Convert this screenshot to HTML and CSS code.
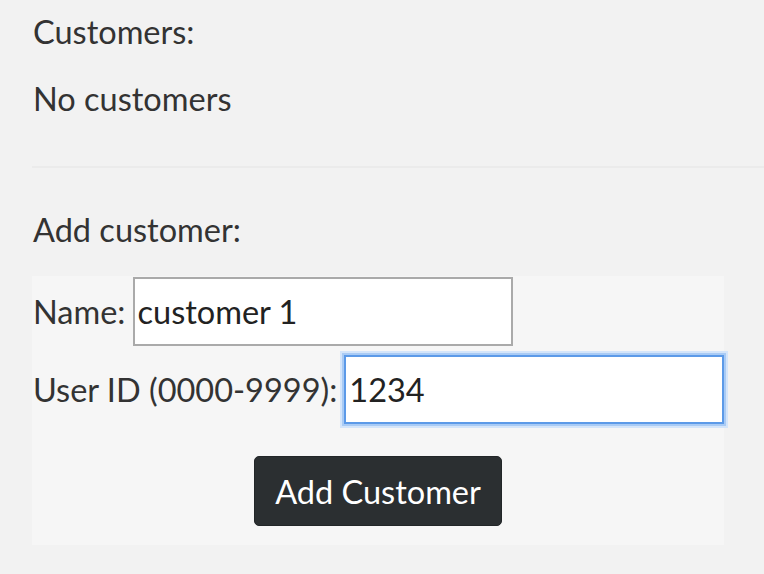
FILE: index.html
```html
<!DOCTYPE html>
<html>
<head>
<meta charset="utf-8">
<link rel="stylesheet" href="styles.css">
</head>
<body>
<div class="page">
  <p class="line first">Customers:</p>
  <p class="line">No customers</p>
  <hr class="divider">
  <p class="line add-title">Add customer:</p>
  <form class="form-box">
    <div class="row">
      <label class="label" for="name">Name:</label>
      <input class="field" id="name" type="text" value="customer 1">
    </div>
    <div class="row">
      <label class="label" for="uid">User ID (0000-9999):</label>
      <input class="field focused" id="uid" type="text" value="1234">
    </div>
    <div class="actions">
      <button class="btn" type="button">Add Customer</button>
    </div>
  </form>
</div>
</body>
</html>
```

FILE: styles.css
```css
html, body {
  margin: 0;
  padding: 0;
  background: #f2f2f2;
}
body {
  font-family: Lato, "Open Sans", sans-serif;
  color: #333333;
  font-size: 32.5px;
}
.page {
  padding: 8px 0 0 32px;
}
.line {
  margin: 0 0 19px 1px;
  font-size: 32.5px;
  line-height: 48px;
}
.divider {
  margin: 43px 0 0 0;
  border: 0;
  height: 2px;
  background: #ebebeb;
}
.add-title {
  margin-top: 38px;
  margin-bottom: 22px;
}
.form-box {
  width: 692px;
  background: #f6f6f6;
  padding: 1px 0 19px 0;
  box-sizing: border-box;
}
.row {
  display: flex;
  align-items: center;
  height: 69px;
  margin-bottom: 9px;
}
.label {
  padding-left: 1px;
  margin-right: 7px;
  white-space: nowrap;
}
.field {
  box-sizing: border-box;
  width: 380px;
  height: 69px;
  border: 2px solid #aaaaaa;
  background: #ffffff;
  padding: 0 3px;
  font-family: Lato, "Open Sans", sans-serif;
  font-size: 32.5px;
  color: #222222;
  outline: none;
}
.focused {
  border: 2px solid #5c9ae8;
  box-shadow: 0 0 0 2px #a9cbf5, 0 0 0 4px #d4e5fa;
}
.actions {
  display: flex;
  justify-content: center;
  padding-top: 23px;
}
.btn {
  box-sizing: border-box;
  width: 248px;
  height: 70px;
  background: #2b2f31;
  color: #ffffff;
  border: 1px solid #222628;
  border-radius: 5px;
  font-family: Lato, "Open Sans", sans-serif;
  font-size: 32.5px;
  padding: 0;
}
```
